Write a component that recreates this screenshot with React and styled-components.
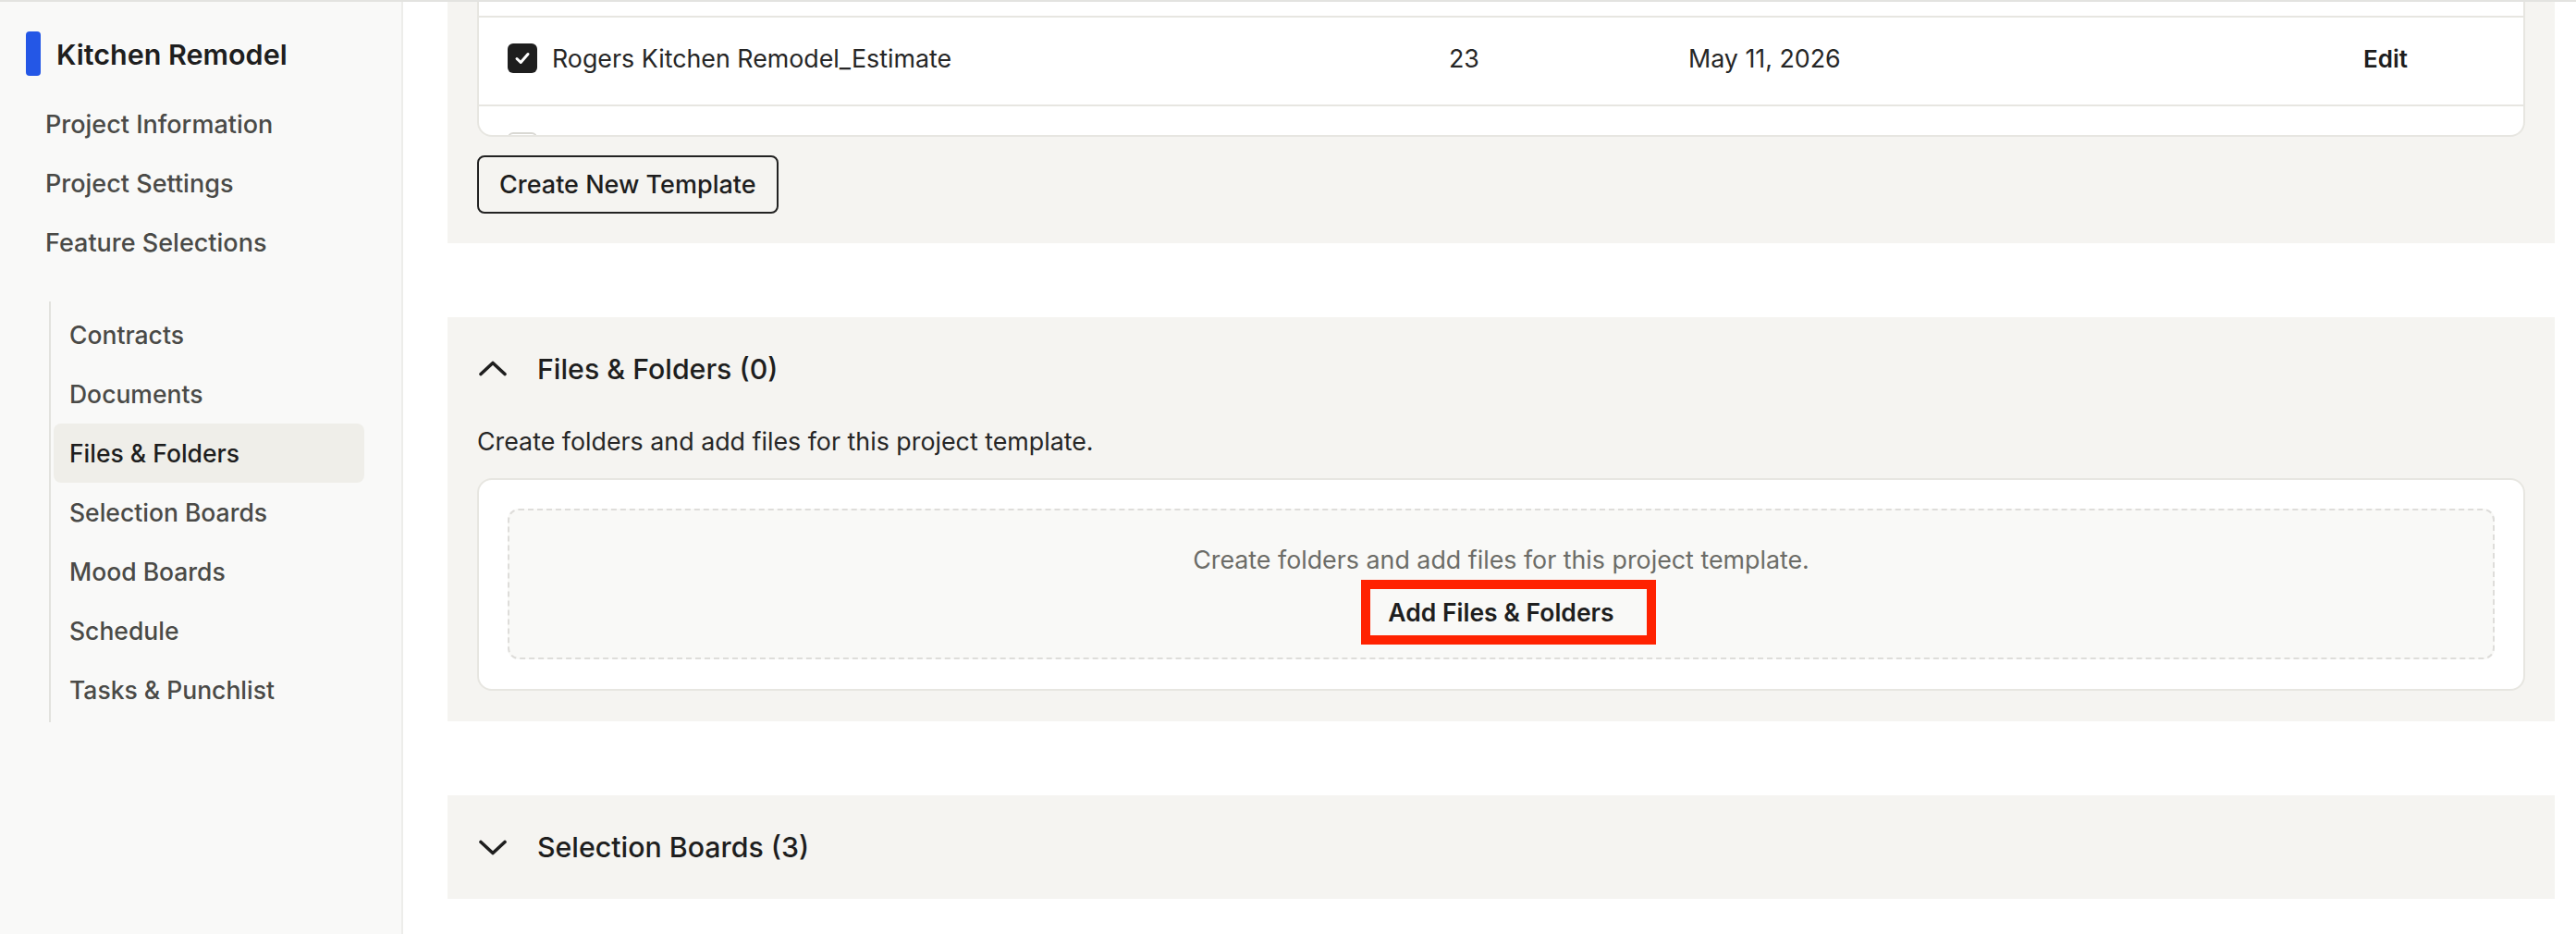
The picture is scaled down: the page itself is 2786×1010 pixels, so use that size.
import React from "react";
import styled, { createGlobalStyle } from "styled-components";

const GlobalStyle = createGlobalStyle`
  * { box-sizing: border-box; }
  html, body { margin: 0; padding: 0; background: #ffffff; }
  body {
    font-family: Inter, "Noto Sans", "Liberation Sans", sans-serif;
    color: #1e1e1e;
    -webkit-font-smoothing: antialiased;
  }
`;

const Page = styled.div`
  display: flex;
  height: 100vh;
  border-top: 2px solid #e3e3e0;
  overflow: hidden;
`;

/* ---------- sidebar ---------- */

const Sidebar = styled.aside`
  width: 436px;
  flex: none;
  background: #f9f9f8;
  border-right: 2px solid #ededea;
  padding: 32px 0 0 28px;
`;

const ProjectTitle = styled.div`
  display: flex;
  align-items: center;
  gap: 17px;
  height: 48px;
  font-size: 30.5px;
  font-weight: 600;
  color: #1e1e1e;
`;

const TitleMarker = styled.span`
  width: 16px;
  height: 48px;
  border-radius: 4px;
  background: #2457e6;
`;

const NavList = styled.nav`
  display: flex;
  flex-direction: column;
  margin-top: 20px;
  padding-left: 21px;
`;

const NavItem = styled.a`
  display: flex;
  align-items: center;
  height: 64px;
  font-size: 27px;
  font-weight: 500;
  color: #4a4a47;
  text-decoration: none;
`;

const SubNav = styled.div`
  display: flex;
  flex-direction: column;
  margin: 32px 0 0 25px;
  padding: 4px 0 3px 3px;
  border-left: 2px solid #e2e2de;
  width: 341px;
`;

const SubNavItem = styled.a`
  display: flex;
  align-items: center;
  height: 64px;
  padding-left: 17px;
  border-radius: 8px;
  font-size: 26.5px;
  font-weight: 500;
  text-decoration: none;
  color: ${(p) => (p.$active ? "#1e1e1e" : "#4a4a47")};
  background: ${(p) => (p.$active ? "#efeee9" : "transparent")};
`;

/* ---------- main column ---------- */

const Main = styled.main`
  flex: 1;
  display: flex;
  flex-direction: column;
  gap: 80px;
  padding: 0 23px 0 48px;
`;

const Panel = styled.section`
  background: #f5f4f1;
  padding: 0 32px ${(p) => p.$pb}px 32px;
`;

const TableCard = styled.div`
  height: 146px;
  overflow: hidden;
  background: #ffffff;
  border: 2px solid #e7e6e1;
  border-top: none;
  border-radius: 0 0 16px 16px;
`;

const RowStub = styled.div`
  height: 17px;
  border-bottom: 2px solid #e7e6e1;
`;

const Row = styled.div`
  display: grid;
  grid-template-columns: 1018px 259px 1fr auto;
  align-items: center;
  height: 96px;
  padding: 0 125px 6px 31px;
  border-bottom: 2px solid #e7e6e1;
  font-size: 26.8px;
  color: #262626;
`;

const NameCell = styled.div`
  display: flex;
  align-items: center;
  gap: 16px;
`;

const Checkbox = styled.span`
  width: 32px;
  height: 32px;
  border-radius: 6px;
  display: inline-flex;
  align-items: center;
  justify-content: center;
  background: ${(p) => (p.$checked ? "#1e1e1e" : "#ffffff")};
  border: ${(p) => (p.$checked ? "none" : "2px solid #d9d8d3")};
`;

const EditLink = styled.a`
  font-weight: 600;
  font-size: 26px;
  color: #1e1e1e;
  text-decoration: none;
`;

const OutlineButton = styled.button`
  margin-top: 20px;
  height: 63px;
  padding: 0 22px;
  border: 2px solid #222222;
  border-radius: 8px;
  background: transparent;
  font-family: inherit;
  font-size: 27px;
  font-weight: 500;
  color: #1e1e1e;
`;

const PanelHeader = styled.div`
  display: flex;
  align-items: center;
  gap: 33px;
  height: 112px;
  padding-left: 2px;
  font-size: 30.3px;
  font-weight: 500;
  color: #1e1e1e;
`;

const Description = styled.p`
  margin: 4px 0 22px;
  font-size: 26.8px;
  line-height: 36px;
  color: #262626;
`;

const FilesCard = styled.div`
  background: #ffffff;
  border: 2px solid #e7e6e1;
  border-radius: 16px;
  padding: 31px 31px 32px;
`;

const DropZone = styled.div`
  display: flex;
  flex-direction: column;
  align-items: center;
  padding: 35px 0 24px;
  background: #f9f9f7;
  border: 2px dashed #dedddA;
  border-radius: 12px;
`;

const DropHint = styled.div`
  font-size: 26.8px;
  line-height: 36px;
  color: #6c6c67;
`;

const AddButton = styled.button`
  position: relative;
  margin-top: 14px;
  height: 50px;
  padding: 0;
  border: none;
  background: transparent;
  font-family: inherit;
  font-size: 26.5px;
  font-weight: 600;
  color: #1e1e1e;
`;

const Highlight = styled.span`
  position: absolute;
  top: -10px;
  bottom: -10px;
  left: -29px;
  right: -45px;
  border: 10px solid #ff2200;
  pointer-events: none;
`;

const Chevron = ({ up }) => (
  <svg width="30" height="30" viewBox="0 0 30 30" fill="none">
    <polyline
      points={up ? "2,20.5 15,8.5 28,20.5" : "2,9.5 15,21.5 28,9.5"}
      stroke="#1e1e1e"
      strokeWidth="3.6"
      strokeLinecap="round"
      strokeLinejoin="round"
    />
  </svg>
);

const Check = () => (
  <svg width="20" height="20" viewBox="0 0 20 20" fill="none">
    <polyline
      points="4,10.5 8.2,14.5 16,5.5"
      stroke="#ffffff"
      strokeWidth="3"
      strokeLinecap="round"
      strokeLinejoin="round"
    />
  </svg>
);

const mainNav = ["Project Information", "Project Settings", "Feature Selections"];
const subNav = [
  "Contracts",
  "Documents",
  "Files & Folders",
  "Selection Boards",
  "Mood Boards",
  "Schedule",
  "Tasks & Punchlist",
];

export default function App() {
  return (
    <>
      <GlobalStyle />
      <Page>
        <Sidebar>
          <ProjectTitle>
            <TitleMarker />
            Kitchen Remodel
          </ProjectTitle>
          <NavList>
            {mainNav.map((item) => (
              <NavItem key={item} href="#">
                {item}
              </NavItem>
            ))}
          </NavList>
          <SubNav>
            {subNav.map((item) => (
              <SubNavItem key={item} href="#" $active={item === "Files & Folders"}>
                {item}
              </SubNavItem>
            ))}
          </SubNav>
        </Sidebar>

        <Main>
          <Panel $pb={32}>
            <TableCard>
              <RowStub />
              <Row>
                <NameCell>
                  <Checkbox $checked>
                    <Check />
                  </Checkbox>
                  Rogers Kitchen Remodel_Estimate
                </NameCell>
                <div>23</div>
                <div>May 11, 2026</div>
                <EditLink href="#">Edit</EditLink>
              </Row>
              <Row>
                <NameCell>
                  <Checkbox />
                </NameCell>
              </Row>
            </TableCard>
            <OutlineButton>Create New Template</OutlineButton>
          </Panel>

          <Panel $pb={33}>
            <PanelHeader>
              <Chevron up />
              Files &amp; Folders (0)
            </PanelHeader>
            <Description>Create folders and add files for this project template.</Description>
            <FilesCard>
              <DropZone>
                <DropHint>Create folders and add files for this project template.</DropHint>
                <AddButton>
                  Add Files &amp; Folders
                  <Highlight />
                </AddButton>
              </DropZone>
            </FilesCard>
          </Panel>

          <Panel $pb={0}>
            <PanelHeader>
              <Chevron />
              Selection Boards (3)
            </PanelHeader>
          </Panel>
        </Main>
      </Page>
    </>
  );
}
